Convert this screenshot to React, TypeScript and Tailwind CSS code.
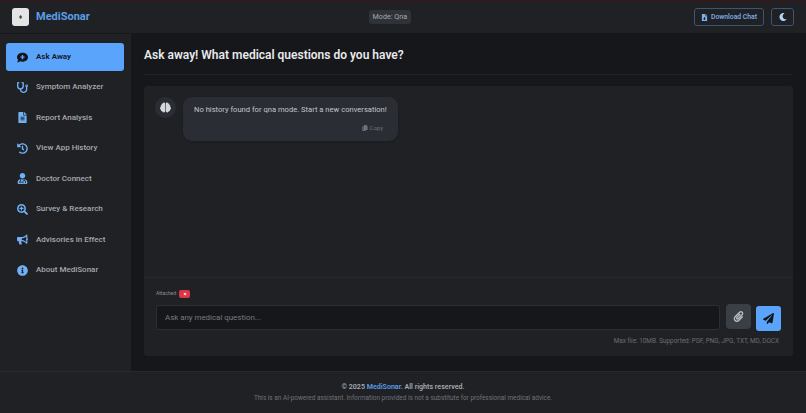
import { FaBrain, FaBullhorn, FaCommentMedical, FaCopy, FaFileDownload, FaFileAlt, FaHistory, FaInfoCircle, FaMoon, FaPaperPlane, FaPaperclip, FaSearchPlus, FaStethoscope, FaTimes, FaUserMd } from 'react-icons/fa';

const navItems = [
  { label: 'Ask Away', icon: FaCommentMedical, active: true },
  { label: 'Symptom Analyzer', icon: FaStethoscope },
  { label: 'Report Analysis', icon: FaFileAlt },
  { label: 'View App History', icon: FaHistory },
  { label: 'Doctor Connect', icon: FaUserMd },
  { label: 'Survey & Research', icon: FaSearchPlus },
  { label: 'Advisories in Effect', icon: FaBullhorn },
  { label: 'About MediSonar', icon: FaInfoCircle },
];

export default function App() {
  return (
    <div className="flex h-[413px] w-[806px] flex-col overflow-hidden bg-[#15171a] font-['Roboto',sans-serif] text-[#d5d7db]">
      <header className="flex h-[34px] shrink-0 items-center justify-between border-t border-t-[#3a1518] border-b border-b-[#15171a] bg-[#1f2125] pl-3 pr-3">
        <div className="flex items-center gap-[7px]">
          <div className="flex h-[18px] w-[17px] items-center justify-center rounded-[3px] bg-[#e4e4e4] text-[7px] text-[#444]">♦</div>
          <span className="text-[11px] font-bold text-[#5a9fe8]">MediSonar</span>
        </div>
        <div className="-ml-[4px] rounded-[3px] bg-[#2f3238] px-[4px] py-[2px] text-[7.2px] leading-[10px] text-[#a6a9af]">Mode: Qna</div>
        <div className="flex items-center gap-[7px]">
          <button className="flex h-[18px] w-[70px] items-center justify-center gap-[3px] rounded-[3px] border border-[#3b5573] text-[6.8px] font-medium text-[#7fb2ea]">
            <FaFileDownload size={7} />
            Download Chat
          </button>
          <button className="flex h-[18px] w-[23px] items-center justify-center rounded-[3px] border border-[#3b5573] text-[#b5d7fa]">
            <FaMoon size={8} />
          </button>
        </div>
      </header>

      <div className="flex min-h-0 flex-1">
        <aside className="flex w-[131px] shrink-0 flex-col bg-[#1f2125] pl-[6px] pr-[7px] pt-[9px]">
          {navItems.map((item) => {
            const Icon = item.icon;
            return (
              <div
                key={item.label}
                className={
                  item.active
                    ? 'mb-[2px] flex h-[28px] items-center rounded-[3px] bg-[#5aa5fb] pl-[11px] text-[8px] font-semibold text-[#12161c]'
                    : 'mb-[2px] flex h-[28.5px] items-center pl-[11px] text-[8px] font-medium text-[#a6a9af]'
                }
              >
                <span className="flex w-[11px] justify-center">
                  <Icon size={11} className={item.active ? 'text-[#12161c]' : 'text-[#70b0f5]'} />
                </span>
                <span className="ml-[8px]">{item.label}</span>
              </div>
            );
          })}
        </aside>

        <main className="flex min-w-0 flex-1 flex-col px-[13px] pt-[13px] pb-[15px]">
          <h1 className="border-b border-[#1f2227] pb-[11px] text-[12px] leading-[16px] font-semibold text-[#e8e9eb]">Ask away! What medical questions do you have?</h1>
          <div className="mt-[11px] flex min-h-0 flex-1 flex-col rounded-[3px] bg-[#1f2125]">
            <div className="flex flex-1 items-start gap-[7px] px-[11px] pt-[11px]">
              <div className="flex h-[21px] w-[21px] items-center justify-center rounded-full bg-[#2a2d33] text-[#d5d7db]">
                <FaBrain size={11} />
              </div>
              <div className="w-[215px] rounded-[9px] bg-[#2a2d33] px-[11px] pt-[8px] pb-[9px] shadow-sm">
                <p className="text-[7.6px] leading-[10px] whitespace-nowrap text-[#c3c5ca]">No history found for qna mode. Start a new conversation!</p>
                <div className="mt-[9px] flex items-center justify-end gap-[1px] pr-[4px] text-[6px] leading-[8px] text-[#6f737a]">
                  <FaCopy size={6} />
                  Copy
                </div>
              </div>
            </div>
            <div className="h-[79px] shrink-0 border-t border-[#26292e] px-[12px] pt-[11px]">
              <div className="flex h-[9px] items-center gap-[2px] text-[5px] text-[#8b8e94]">
                Attached:
                <span className="flex h-[8px] w-[11px] items-center justify-center rounded-[2px] bg-[#dc3545] text-white">
                  <FaTimes size={4} />
                </span>
              </div>
              <div className="mt-[7px] flex items-start">
                <div className="flex h-[25px] w-[564px] items-center rounded-[3px] border border-[#2b2e34] bg-[#15171b] px-[8px] text-[7.9px] text-[#777a80]">Ask any medical question...</div>
                <button className="-mt-[1px] ml-[6px] flex h-[25px] w-[25px] items-center justify-center rounded-[4px] bg-[#3a3e45] text-[#b9bcc2]">
                  <FaPaperclip size={11} />
                </button>
                <button className="mt-[1px] ml-[5px] flex h-[25px] w-[25px] items-center justify-center rounded-[3px] bg-[#5aa5fb] text-[#12161c]">
                  <FaPaperPlane size={11} />
                </button>
              </div>
              <p className="mt-[6px] pr-[2px] text-right text-[6.4px] leading-[9px] text-[#6b6e74]">Max file: 10MB. Supported: PDF, PNG, JPG, TXT, MD, DOCX</p>
            </div>
          </div>
        </main>
      </div>

      <footer className="h-[42px] shrink-0 border-t border-[#26292e] bg-[#1f2125] pt-[10px] text-center">
        <p className="text-[7.1px] leading-[10px] font-semibold text-[#a6a9af]">
          © 2025 <span className="text-[#5a9fe8]">MediSonar</span>. All rights reserved.
        </p>
        <p className="mt-[1px] text-[6.45px] leading-[10px] text-[#6f7278]">This is an AI-powered assistant. Information provided is not a substitute for professional medical advice.</p>
      </footer>
    </div>
  );
}
